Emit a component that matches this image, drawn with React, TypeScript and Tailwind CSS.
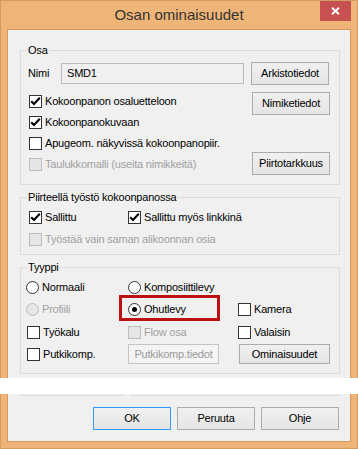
import clsx from "clsx";
import type { ReactNode } from "react";

const font = "font-['Liberation_Sans',Arial,sans-serif]";

function CheckBox({ checked = false, disabled = false }: { checked?: boolean; disabled?: boolean }) {
  return (
    <span
      className={clsx(
        "flex h-[13px] w-[13px] shrink-0 items-center justify-center border",
        disabled ? "border-[#bcbcbc] bg-[#e6e6e6]" : "border-[#333333] bg-white"
      )}
    >
      {checked && (
        <svg width="11" height="11" viewBox="0 0 11 11">
          <path d="M1.2 5.2 L4 8 L9.8 1.8" fill="none" stroke="#000" strokeWidth="2.1" />
        </svg>
      )}
    </span>
  );
}

function Radio({ checked = false, disabled = false }: { checked?: boolean; disabled?: boolean }) {
  return (
    <span
      className={clsx(
        "flex h-[13px] w-[13px] shrink-0 items-center justify-center rounded-full border",
        disabled ? "border-[#bcbcbc] bg-[#e6e6e6]" : "border-[#333333] bg-white"
      )}
    >
      {checked && <span className="h-[5px] w-[5px] rounded-full bg-black" />}
    </span>
  );
}

interface OptionProps {
  label: string;
  radio?: boolean;
  checked?: boolean;
  disabled?: boolean;
  className?: string;
}

function Option({ label, radio, checked, disabled, className }: OptionProps) {
  return (
    <div className={clsx("flex items-center", className)}>
      {radio ? <Radio checked={checked} disabled={disabled} /> : <CheckBox checked={checked} disabled={disabled} />}
      <span className={clsx("ml-[3px] whitespace-nowrap", disabled ? "text-[#a0a0a0]" : "text-black")}>{label}</span>
    </div>
  );
}

interface BtnProps {
  children: ReactNode;
  className?: string;
  disabled?: boolean;
  primary?: boolean;
}

function Btn({ children, className, disabled, primary }: BtnProps) {
  return (
    <button
      type="button"
      className={clsx(
        "flex shrink-0 items-center justify-center border whitespace-nowrap",
        disabled
          ? "border-[#c4c4c4] bg-[#f4f4f4] text-[#9a9a9a]"
          : "bg-linear-to-b from-[#f0f0f0] to-[#e5e5e5] text-black",
        !disabled && (primary ? "border-[#3399ff]" : "border-[#acacac]"),
        className
      )}
    >
      {children}
    </button>
  );
}

function Group({ title, className, children }: { title: string; className?: string; children: ReactNode }) {
  return (
    <fieldset className={clsx("ml-[12px] w-[320px] border border-[#dcdcdc]", className)}>
      <legend className="ml-[6px] px-[1px] leading-[13px]">{title}</legend>
      {children}
    </fieldset>
  );
}

export default function App() {
  return (
    <div className={clsx("relative h-[449px] w-[358px] border border-[#d39c63] bg-[#efb477]", font)}>
      {/* title bar */}
      <div className="flex h-[28px] items-center justify-center text-[15px] leading-[28px] text-[#333333]">
        Osan ominaisuudet
      </div>
      <div className="absolute top-0 right-[6px] flex h-[20px] w-[31px] items-center justify-center bg-[#c75050]">
        <svg width="9" height="8" viewBox="0 0 9 8">
          <path d="M1 0.8 L8 7.2 M8 0.8 L1 7.2" stroke="#fff" strokeWidth="1.9" />
        </svg>
      </div>

      {/* client */}
      <div className="ml-[6px] flex h-[413px] w-[344px] flex-col border border-[#cf9b62] bg-[#f0f0f0] text-[11px] tracking-[-0.2px] text-black">
        <Group title="Osa" className="mt-[14px]">
          <div className="mt-[5px] flex h-[23px] items-center">
            <span className="w-[40px] pl-[7px]">Nimi</span>
            <div className="flex h-[21px] w-[183px] items-center border border-[#bdbdbd] bg-[#f0f0f0] pl-[5px]">SMD1</div>
            <Btn className="ml-[7px] h-[23px] w-[78px]">Arkistotiedot</Btn>
          </div>
          <div className="mt-[6px] flex pb-[9px]">
            <div className="flex flex-1 flex-col pl-[8px]">
              <Option className="h-[21px]" label="Kokoonpanon osaluetteloon" checked />
              <Option className="h-[21px]" label="Kokoonpanokuvaan" checked />
              <Option className="h-[21px]" label="Apugeom. näkyvissä kokoonpanopiir." />
              <Option className="h-[21px]" label="Taulukkomalli (useita nimikkeitä)" disabled />
            </div>
            <div className="mr-[9px] flex w-[78px] flex-col">
              <Btn className="mt-[1px] h-[23px] w-[78px]">Nimiketiedot</Btn>
              <Btn className="mt-[37px] h-[23px] w-[78px]">Piirtotarkkuus</Btn>
            </div>
          </div>
        </Group>

        <Group title="Piirteellä työstö kokoonpanossa" className="mt-[6px]">
          <div className="flex flex-col pt-[3px] pb-[4px] pl-[8px]">
            <div className="flex h-[21px] items-center">
              <Option className="w-[99px]" label="Sallittu" checked />
              <Option label="Sallittu myös linkkinä" checked />
            </div>
            <Option className="mt-[1px] h-[21px]" label="Työstää vain saman alikoonnan osia" disabled />
          </div>
        </Group>

        <Group title="Tyyppi" className="mt-[6px]">
          <div className="flex flex-col pt-[2px] pb-[8px]">
            <div className="flex h-[22px] items-center">
              <Option radio className="w-[107px] pl-[5px]" label="Normaali" />
              <Option radio className="w-[110px]" label="Komposiittilevy" />
            </div>
            <div className="flex h-[22px] items-center">
              <Option radio className="w-[107px] pl-[5px]" label="Profiili" disabled />
              <div className="relative flex h-[22px] w-[110px] items-center">
                <Option radio label="Ohutlevy" checked />
                <div className="absolute top-[-3px] left-[-9px] h-[26px] w-[101px] border-[3px] border-[#bd1010]" />
              </div>
              <Option label="Kamera" />
            </div>
            <div className="mt-[1px] flex h-[22px] items-center">
              <Option className="w-[107px] pl-[6px]" label="Työkalu" />
              <Option className="w-[110px]" label="Flow osa" disabled />
              <Option label="Valaisin" />
            </div>
            <div className="flex h-[22px] items-center">
              <Option className="w-[107px] pl-[6px]" label="Putkikomp." />
              <div className="w-[110px]">
                <Btn disabled className="h-[20px] w-[91px]">Putkikomp.tiedot</Btn>
              </div>
              <Btn className="ml-[1px] h-[20px] w-[91px]">Ominaisuudet</Btn>
            </div>
          </div>
        </Group>

        {/* group boxes partly hidden under the white strip */}
        <div className="mt-[4px] flex">
          <div className="ml-[12px] h-[18px] w-[103px] border-x border-b border-[#dcdcdc]" />
          <div className="ml-[8px] h-[18px] w-[208px] border-x border-b border-[#dcdcdc]" />
        </div>

        <div className="mt-[11px] flex justify-end gap-[6px] pr-[11px]">
          <Btn primary className="h-[23px] w-[78px]">OK</Btn>
          <Btn className="h-[23px] w-[78px]">Peruuta</Btn>
          <Btn className="h-[23px] w-[78px]">Ohje</Btn>
        </div>
      </div>

      <div className="absolute top-[377px] -left-px h-[16px] w-[358px] bg-white" />
    </div>
  );
}
